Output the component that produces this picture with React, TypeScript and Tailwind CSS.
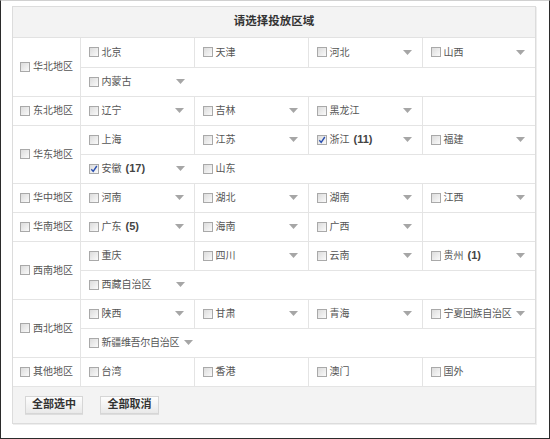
import React from "react";

type Prov = { name: string; count?: number; checked?: boolean; arrow?: boolean; tight?: boolean };
type Region = { name: string; rows: Prov[][] };

const regions: Region[] = [
  {
    name: "华北地区",
    rows: [
      [{ name: "北京" }, { name: "天津" }, { name: "河北", arrow: true }, { name: "山西", arrow: true }],
      [{ name: "内蒙古", arrow: true }],
    ],
  },
  {
    name: "东北地区",
    rows: [[{ name: "辽宁", arrow: true }, { name: "吉林", arrow: true }, { name: "黑龙江", arrow: true }]],
  },
  {
    name: "华东地区",
    rows: [
      [
        { name: "上海" },
        { name: "江苏", arrow: true },
        { name: "浙江", count: 11, checked: true, arrow: true },
        { name: "福建", arrow: true },
      ],
      [{ name: "安徽", count: 17, checked: true, arrow: true }, { name: "山东" }],
    ],
  },
  {
    name: "华中地区",
    rows: [[{ name: "河南", arrow: true }, { name: "湖北", arrow: true }, { name: "湖南", arrow: true }, { name: "江西", arrow: true }]],
  },
  {
    name: "华南地区",
    rows: [[{ name: "广东", count: 5, arrow: true }, { name: "海南", arrow: true }, { name: "广西", arrow: true }]],
  },
  {
    name: "西南地区",
    rows: [
      [{ name: "重庆" }, { name: "四川", arrow: true }, { name: "云南", arrow: true }, { name: "贵州", count: 1, arrow: true }],
      [{ name: "西藏自治区", arrow: true }],
    ],
  },
  {
    name: "西北地区",
    rows: [
      [{ name: "陕西", arrow: true }, { name: "甘肃", arrow: true }, { name: "青海", arrow: true }, { name: "宁夏回族自治区", arrow: true, tight: true }],
      [{ name: "新疆维吾尔自治区", arrow: true, tight: true }],
    ],
  },
  {
    name: "其他地区",
    rows: [[{ name: "台湾" }, { name: "香港" }, { name: "澳门" }, { name: "国外" }]],
  },
];

function Box({ checked }: { checked?: boolean }) {
  return (
    <span className="relative inline-block w-[10px] h-[10px] shrink-0 border border-[#a9a9a9] bg-gradient-to-br from-[#dcdcdc] to-[#fafafa]">
      {checked && (
        <svg className="absolute left-0 top-0" width="8" height="8" viewBox="0 0 8 8">
          <path d="M1.3 4.3 L3.2 6.4 L6.8 1" fill="none" stroke="#2a4fb0" strokeWidth="1.4" />
        </svg>
      )}
    </span>
  );
}

function Arrow() {
  return (
    <svg width="9" height="5" viewBox="0 0 9 5" className="shrink-0">
      <path d="M0 0 H9 L4.5 5 Z" fill="#a6a6a6" />
    </svg>
  );
}

function Item({ p, w }: { p: Prov; w?: string }) {
  return (
    <div className={`flex items-center h-full pl-[8px] pr-[10px] ${w ?? ""}`}>
      <Box checked={p.checked} />
      <span className={`ml-[3px] text-[10px] text-[#555] whitespace-nowrap ${p.tight ? "tracking-[-0.3px]" : ""}`}>
        {p.name}
        {p.count !== undefined && <span className="font-bold text-[#444] ml-[4px] text-[11px]">({p.count})</span>}
      </span>
      {p.arrow && (p.tight ? <span className="ml-[5px] flex"><Arrow /></span> : <span className="ml-auto flex"><Arrow /></span>)}
    </div>
  );
}

export default function App() {
  return (
    <div
      className="w-[550px] h-[439px] bg-white border-x border-b border-[#2b2b2b] border-t border-t-[#d0d0d0] pl-[11px] pt-[5px]"
      style={{ fontFamily: '"Liberation Sans", "Noto Sans CJK SC", sans-serif' }}
    >
      <div className="w-[524px] border border-[#dcdcdc] shadow-[1px_1px_0_#eee]">
        <div className="h-[31px] bg-[#f3f3f3] border-b border-[#e2e2e2] flex items-center justify-center text-[11.5px] font-bold text-[#333]">
          请选择投放区域
        </div>
        <table className="w-full border-collapse table-fixed">
          <colgroup>
            <col className="w-[67px]" />
            <col className="w-[114px]" />
            <col className="w-[114px]" />
            <col className="w-[114px]" />
            <col />
          </colgroup>
          <tbody>
            {regions.map((r) =>
              r.rows.map((row, i) => (
                <tr key={r.name + i} className="h-[29px]">
                  {i === 0 && (
                    <td rowSpan={r.rows.length} className="border-b border-r border-[#e4e4e4] p-0 align-middle">
                      <div className="flex items-center pl-[7px]">
                        <Box />
                        <span className="ml-[3px] text-[10px] text-[#555] whitespace-nowrap">{r.name}</span>
                      </div>
                    </td>
                  )}
                  {i === 0 ? (
                    [0, 1, 2, 3].map((c) => (
                      <td key={c} className={`p-0 h-[29px] border-b border-[#e4e4e4] ${c < 3 ? "border-r" : ""}`}>
                        {row[c] && <Item p={row[c]} />}
                      </td>
                    ))
                  ) : (
                    <td colSpan={4} className="p-0 h-[29px] border-b border-[#e4e4e4]">
                      <div className="flex h-[28px]">
                        {row.map((p) => (
                          <Item key={p.name} p={p} w={p.tight ? "" : "w-[114px]"} />
                        ))}
                      </div>
                    </td>
                  )}
                </tr>
              ))
            )}
          </tbody>
        </table>
        <div className="h-[36px] bg-[#f3f3f3] flex items-center gap-[17px] pl-[12px]">
          <button className="h-[18px] w-[58px] border border-[#d6d6d6] bg-gradient-to-b from-[#fdfdfd] to-[#e9e9e9] text-[11px] font-bold text-[#333] leading-none shadow-[0_1px_0_#ddd]">
            全部选中
          </button>
          <button className="h-[18px] w-[59px] border border-[#d6d6d6] bg-gradient-to-b from-[#fdfdfd] to-[#e9e9e9] text-[11px] font-bold text-[#333] leading-none shadow-[0_1px_0_#ddd]">
            全部取消
          </button>
        </div>
      </div>
    </div>
  );
}
